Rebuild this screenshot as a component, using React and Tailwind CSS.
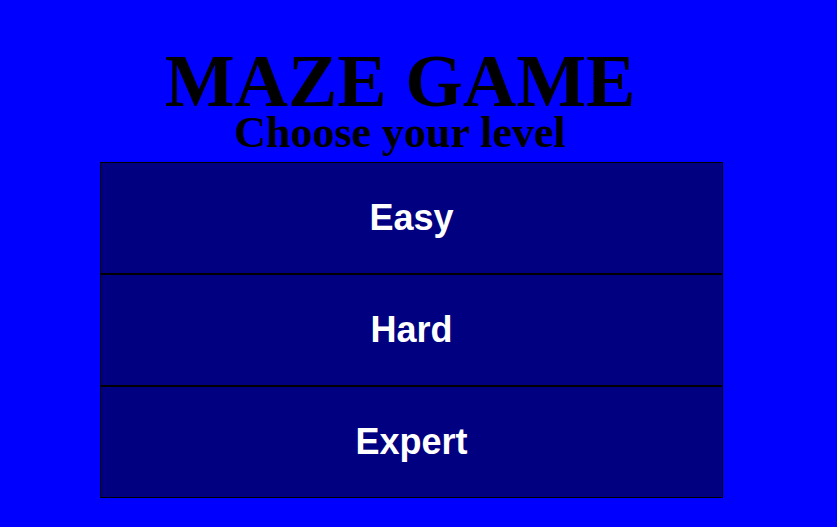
const levels = ["Easy", "Hard", "Expert"];

export default function App() {
    return (
        <div className="min-h-[527px] w-full bg-[#0000ff] overflow-hidden">
            <div className="w-[800px] text-center text-black font-bold" style={{ fontFamily: '"Liberation Serif", "Times New Roman", serif' }}>
                <h1 className="mt-[44px] h-[67px] leading-[74px] text-[74px]">MAZE GAME</h1>
                <h2 className="h-[51px] leading-[44px] text-[44px]">Choose your level</h2>
            </div>
            <div className="ml-[100px] w-[623px] flex flex-col">
                {levels.map((level) => (
                    <button
                        key={level}
                        type="button"
                        className="h-[112px] w-full flex items-center justify-center bg-[#000080] border border-black text-white font-bold text-[36px]"
                        style={{ fontFamily: '"Liberation Sans", Arial, sans-serif' }}
                    >
                        {level}
                    </button>
                ))}
            </div>
        </div>
    );
}
